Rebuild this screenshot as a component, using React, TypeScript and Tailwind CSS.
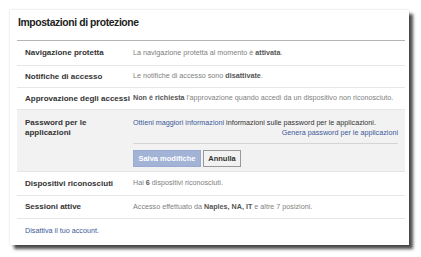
import React from "react";

const font = { fontFamily: '"Liberation Sans", Arial, sans-serif' };

function Row({
  label,
  children,
  h,
}: {
  label: React.ReactNode;
  children: React.ReactNode;
  h: string;
}) {
  return (
    <div className={`grid grid-cols-[116px_1fr] items-center border-b border-[#e6e6e6] ${h}`}>
      <div className="pl-[8px] text-[8px] font-bold text-[#333]">{label}</div>
      <div className="text-[7.2px] text-[#808080] whitespace-nowrap">{children}</div>
    </div>
  );
}

export default function App() {
  return (
    <div className="w-[421px] h-[257px] bg-white pt-[10px] pl-[10px]" style={font}>
      <div className="w-[399px] h-[235px] bg-white shadow-[0_0_2px_rgba(0,0,0,0.18),4px_4px_3px_rgba(0,0,0,0.7)] pl-[7px] pr-[4px]">
        <div className="h-[31px] flex items-center pb-[4px] pl-[1px] border-b border-[#b5b5b5]">
          <span className="text-[10.4px] font-bold text-[#222] tracking-[-0.4px]">Impostazioni di protezione</span>
        </div>
        <Row label="Navigazione protetta" h="h-[25px]">
          La navigazione protetta al momento è <b className="text-[#555]">attivata</b>.
        </Row>
        <Row label="Notifiche di accesso" h="h-[22px]">
          Le notifiche di accesso sono <b className="text-[#555]">disattivate</b>.
        </Row>
        <Row label="Approvazione degli accessi" h="h-[22px]">
          <b className="text-[#555]">Non è richiesta</b> l'approvazione quando accedi da un dispositivo non riconosciuto.
        </Row>
        <div className="grid grid-cols-[116px_1fr] h-[62px] bg-[#f2f2f2] pt-[8px] border-b border-[#e6e6e6]">
          <div className="pl-[8px] text-[8px] leading-[10px] font-bold text-[#333]">
            Password per le
            <br />
            applicazioni
          </div>
          <div className="pr-[7px] text-[7.2px] leading-[10px] text-[#808080]">
            <div className="whitespace-nowrap">
              <span className="text-[#3b5998]">Ottieni maggiori informazioni</span>{" "}
              <span className="text-[#333]">informazioni sulle password per le applicazioni.</span>
            </div>
            <div className="text-right text-[#3b5998] whitespace-nowrap">Genera password per le applicazioni</div>
            <div className="mt-[5px] border-t border-[#d4d4d4]" />
            <div className="mt-[6px] flex gap-[2px]">
              <div className="w-[68px] h-[17px] flex items-center justify-center bg-[#a2b3d6] border border-[#98aad2] text-white font-bold text-[7.5px]">
                Salva modifiche
              </div>
              <div className="w-[38px] h-[17px] flex items-center justify-center bg-[#f2f2f2] border border-[#999] text-[#333] font-bold text-[7.5px]">
                Annulla
              </div>
            </div>
          </div>
        </div>
        <Row label="Dispositivi riconosciuti" h="h-[24px]">
          Hai <b className="text-[#555]">6</b> dispositivi riconosciuti.
        </Row>
        <Row label="Sessioni attive" h="h-[23px]">
          Accesso effettuato da <b className="text-[#555]">Naples, NA, IT</b> e altre 7 posizioni.
        </Row>
        <div className="h-[25px] flex items-center pl-[8px] text-[7.2px] text-[#3b5998]">
          Disattiva il tuo account.
        </div>
      </div>
    </div>
  );
}
